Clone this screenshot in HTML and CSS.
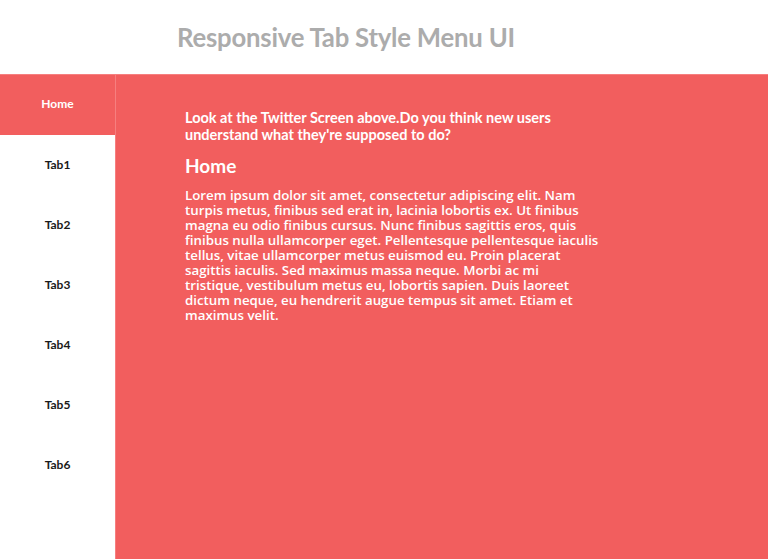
FILE: index.html
```html
<!DOCTYPE html>
<html lang="en">
<head>
<meta charset="utf-8">
<title>Responsive Tab Style Menu UI</title>
<link rel="stylesheet" href="styles.css">
</head>
<body>
<header class="header">
  <h1 class="title">Responsive Tab Style Menu UI</h1>
</header>
<main class="tabs">
  <nav class="tab-list">
    <div class="tab active">Home</div>
    <div class="tab">Tab1</div>
    <div class="tab">Tab2</div>
    <div class="tab">Tab3</div>
    <div class="tab">Tab4</div>
    <div class="tab">Tab5</div>
    <div class="tab">Tab6</div>
  </nav>
  <section class="panel">
    <p class="question">Look at the Twitter Screen above.Do you think new users understand what they're supposed to do?</p>
    <h2 class="panel-title">Home</h2>
    <p class="panel-text">Lorem ipsum dolor sit amet, consectetur adipiscing elit. Nam turpis metus, finibus sed erat in, lacinia lobortis ex. Ut finibus magna eu odio finibus cursus. Nunc finibus sagittis eros, quis finibus nulla ullamcorper eget. Pellentesque pellentesque iaculis tellus, vitae ullamcorper metus euismod eu. Proin placerat sagittis iaculis. Sed maximus massa neque. Morbi ac mi tristique, vestibulum metus eu, lobortis sapien. Duis laoreet dictum neque, eu hendrerit augue tempus sit amet. Etiam et maximus velit.</p>
  </section>
</main>
</body>
</html>
```

FILE: styles.css
```css
* { box-sizing: border-box; }
html, body { margin: 0; padding: 0; }
body {
  width: 768px;
  height: 559px;
  overflow: hidden;
  background: #ffffff;
  font-family: Lato, "Open Sans", sans-serif;
}
.header {
  height: 74px;
  display: flex;
  align-items: center;
  padding-left: 177px;
}
.title {
  margin: 0;
  font-size: 25.7px;
  font-weight: 700;
  color: #acacac;
  letter-spacing: -0.2px;
}
.tabs {
  display: flex;
  height: 485px;
  border-top: 1px solid #f67f7f;
}
.tab-list {
  width: 116px;
  flex: none;
  display: flex;
  flex-direction: column;
  border-right: 1px solid #f67f7f;
  background: #ffffff;
}
.tab {
  height: 60px;
  display: flex;
  align-items: center;
  justify-content: center;
  padding-bottom: 1px;
  font-size: 12px;
  font-weight: 700;
  color: #1a1a1a;
}
.tab.active {
  background: #f25e5e;
  color: #ffffff;
  padding-bottom: 3px;
}
.panel {
  flex: 1;
  background: #f25e5e;
  color: #ffffff;
  padding: 34px 0 0 69px;
}
.question {
  margin: 0;
  width: 400px;
  font-size: 14.5px;
  line-height: 17px;
  font-weight: 700;
}
.panel-title {
  margin: 12px 0 0;
  font-size: 19px;
  line-height: 22px;
  font-weight: 700;
}
.panel-text {
  margin: 11px 0 0;
  width: 415px;
  font-family: "Open Sans", sans-serif;
  font-size: 13.3px;
  line-height: 15px;
  font-weight: 600;
}
```
